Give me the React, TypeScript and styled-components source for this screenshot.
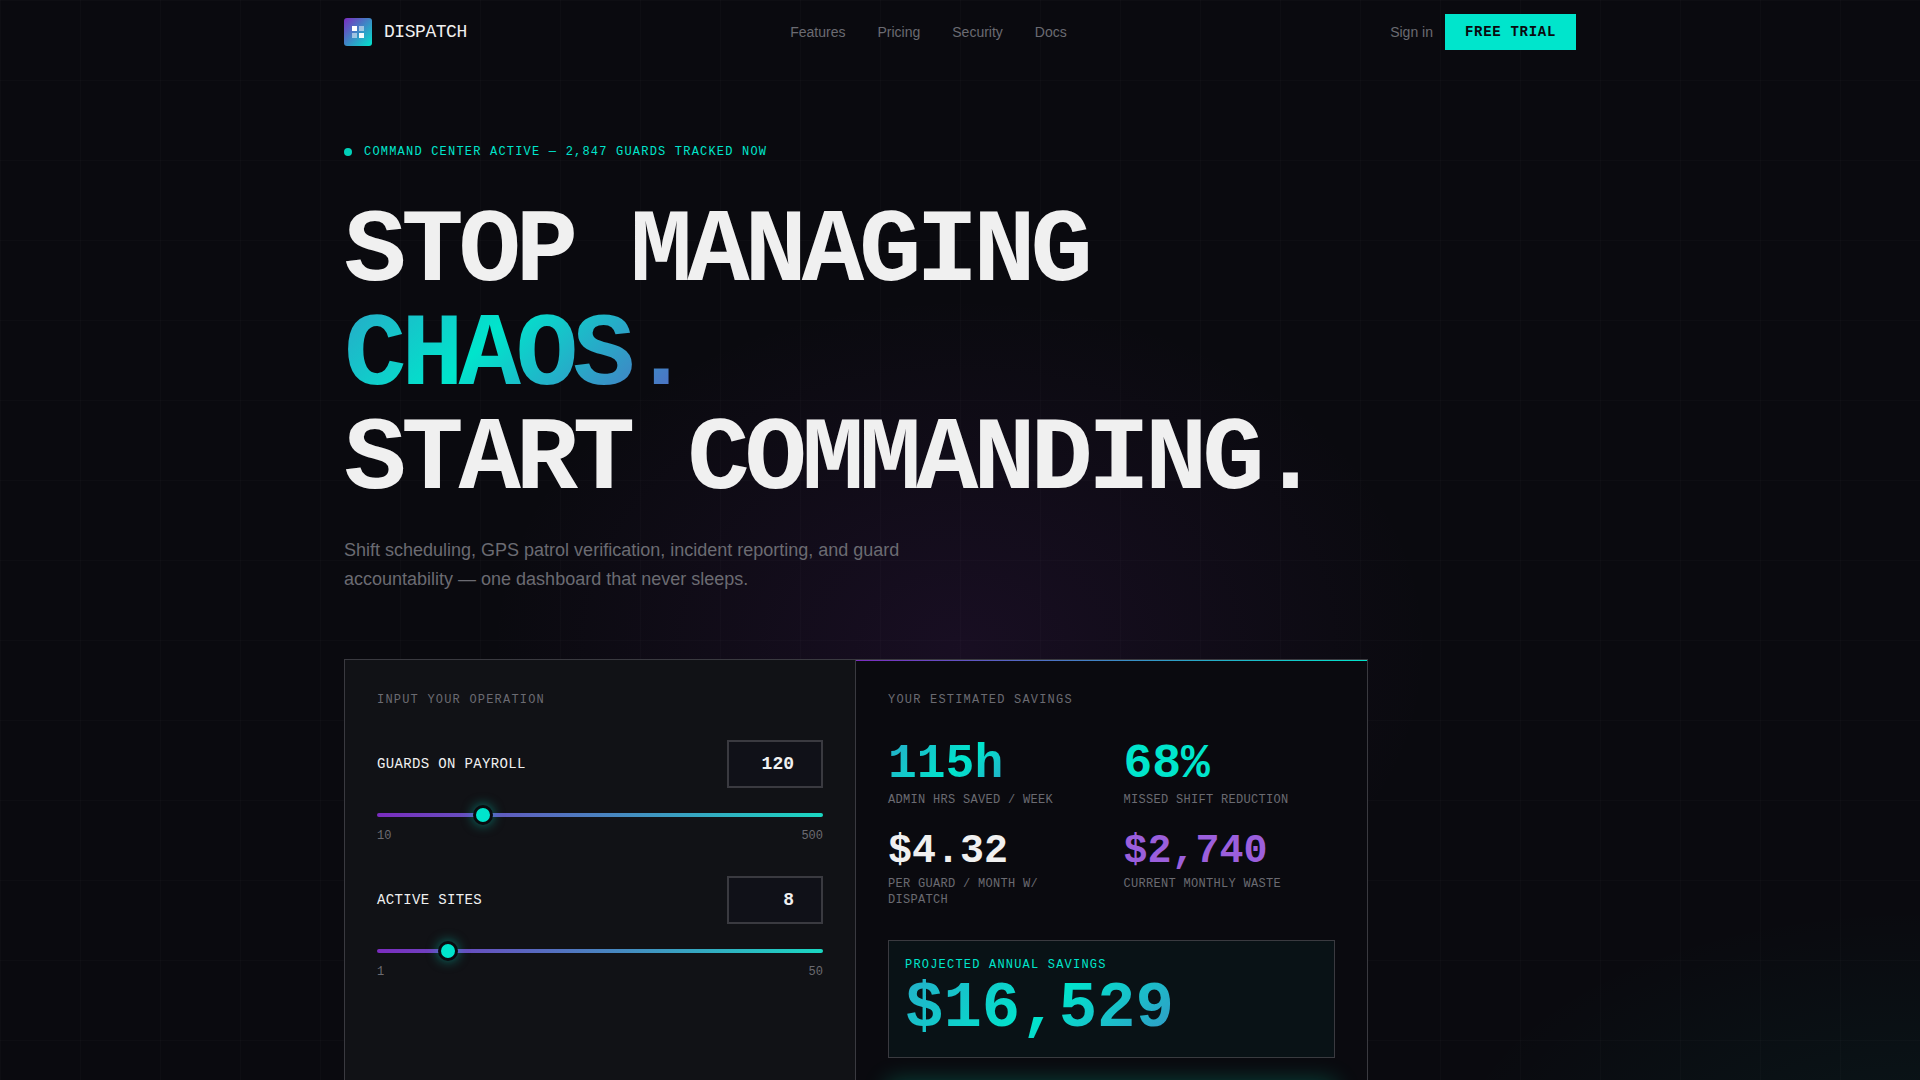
import React, { useState } from "react";
import styled, { createGlobalStyle, css } from "styled-components";
import { ArrowRight } from "lucide-react";

const mono = '"Liberation Mono", "Courier New", monospace';
const sans = '"Liberation Sans", Arial, sans-serif';
const teal = "#00e5cc";
const violet = "#7b2cbf";
const ink = "#0a0a0f";
const line = "#3a3a40";
const muted = "#6b6b72";
const paper = "#f0f0f0";

const chroma = css`
  background: linear-gradient(135deg, ${violet} 0%, ${teal} 60%, ${violet} 100%);
  background-size: 200% 200%;
  background-position: 90% 50%;
  background-clip: text;
  -webkit-background-clip: text;
  color: transparent;
`;

const GlobalStyle = createGlobalStyle`
  *, *::before, *::after { box-sizing: border-box; }
  body { margin: 0; background: ${ink}; color: ${paper}; font-family: ${sans}; }
  h1, h2, p, dl, dd { margin: 0; }
  h2 { font-weight: 400; }
  a { color: inherit; text-decoration: none; }
`;

const Page = styled.div`
  height: 100vh;
  overflow: hidden;
  background:
    radial-gradient(ellipse 470px 350px at 50% 60%, rgba(128, 44, 175, 0.12), transparent),
    radial-gradient(ellipse 480px 260px at 100% 108%, rgba(0, 229, 204, 0.06), transparent),
    linear-gradient(rgba(255, 255, 255, 0.016) 1px, transparent 1px) 0 0 / 80px 80px,
    linear-gradient(90deg, rgba(255, 255, 255, 0.016) 1px, transparent 1px) 0 0 / 80px 80px,
    ${ink};
`;

const Container = styled.div`
  max-width: 1280px;
  margin: 0 auto;
  padding: 0 24px;
`;

const NavBar = styled.header`
  display: flex;
  align-items: center;
  justify-content: space-between;
  height: 64px;
`;

const Brand = styled.a`
  display: flex;
  align-items: center;
  gap: 12px;
  font: 500 18px/28px ${mono};
  letter-spacing: -0.025em;
`;

const NavLinks = styled.nav`
  display: flex;
  gap: 32px;
  font-size: 14px;
  line-height: 20px;
  color: ${muted};
`;

const Actions = styled.div`
  display: flex;
  align-items: center;
  gap: 12px;
  font-size: 14px;
  line-height: 20px;
  color: ${muted};
`;

const TrialButton = styled.button`
  border: 0;
  padding: 8px 20px;
  background: ${teal};
  color: ${ink};
  font: 700 14px/20px ${mono};
  letter-spacing: 0.05em;
  cursor: pointer;
`;

const Hero = styled.main`
  padding-top: 80px;
`;

const Status = styled.p`
  display: flex;
  align-items: center;
  gap: 12px;
  margin-bottom: 40px;
  color: ${teal};
  font: 12px/16px ${mono};
  letter-spacing: 0.1em;
`;

const Dot = styled.i`
  width: 8px;
  height: 8px;
  border-radius: 50%;
  background: ${teal};
  opacity: 0.9;
`;

const Headline = styled.h1`
  margin-bottom: 24px;
  font: 700 104px/104px ${mono};
  letter-spacing: -0.05em;
`;

const Chroma = styled.span`
  ${chroma}
`;

const Lead = styled.p`
  max-width: 576px;
  margin-bottom: 65px;
  color: ${muted};
  font-size: 18px;
  line-height: 29px;
`;

const Calculator = styled.section`
  display: grid;
  grid-template-columns: 1fr 1fr;
  max-width: 1024px;
  border: 1px solid ${line};
`;

const Panel = styled.div`
  display: flex;
  flex-direction: column;
  gap: 32px;
  padding: 32px;
`;

const InputPanel = styled(Panel)`
  border-right: 1px solid ${line};
  background: #111216;
`;

const ResultPanel = styled(Panel)`
  position: relative;
  background: ${ink};

  &::before {
    content: "";
    position: absolute;
    top: 0;
    left: 0;
    right: 0;
    height: 1px;
    background: linear-gradient(90deg, ${violet}, ${teal});
  }
`;

const PanelTitle = styled.h2`
  color: ${muted};
  font: 12px/16px ${mono};
  letter-spacing: 0.1em;
`;

const FieldHead = styled.div`
  display: flex;
  align-items: center;
  justify-content: space-between;
  margin-bottom: 16px;
`;

const FieldLabel = styled.label`
  font: 14px/20px ${mono};
  letter-spacing: 0.025em;
`;

const NumberBox = styled.input`
  width: 96px;
  height: 48px;
  padding: 8px 12px;
  border: 2px solid ${line};
  border-radius: 0;
  background: #101118;
  color: ${paper};
  font: 700 18px/28px ${mono};
  text-align: right;
  outline: none;
`;

const Slider = styled.input`
  display: block;
  width: 100%;
  height: 22px;
  margin: 0;
  appearance: none;
  background: transparent;
  cursor: pointer;

  &::-webkit-slider-runnable-track {
    height: 4px;
    border-radius: 2px;
    background: linear-gradient(90deg, ${violet}, #1ad8c2);
  }

  &::-webkit-slider-thumb {
    appearance: none;
    width: 20px;
    height: 20px;
    margin-top: -8px;
    border: 3px solid ${ink};
    border-radius: 50%;
    background: ${teal};
    box-shadow: 0 0 12px rgba(0, 229, 204, 0.5);
  }
`;

const Scale = styled.div`
  display: flex;
  justify-content: space-between;
  padding-top: 2px;
  color: ${muted};
  font: 12px/16px ${mono};
`;

const Stats = styled.dl`
  display: grid;
  grid-template-columns: 1fr 1fr;
  gap: 24px;
`;

const Stat = styled.div`
  display: flex;
  flex-direction: column-reverse;
  justify-content: flex-end;
  align-items: flex-start;
  gap: 4px;
`;

const StatName = styled.dt`
  color: ${muted};
  font: 12px/16px ${mono};
  letter-spacing: 0.025em;
`;

const StatValue = styled.dd<{ $size: number; $color?: string }>`
  align-self: stretch;
  font: 700 ${(p) => p.$size}px / ${(p) => p.$size}px ${mono};
  ${(p) => (p.$color ? `color: ${p.$color};` : chroma)}
`;

const Outcome = styled.div`
  display: flex;
  flex-direction: column;
  gap: 24px;
`;

const Projection = styled.div`
  padding: 16px;
  border: 1px solid ${line};
  background: rgba(0, 229, 204, 0.04);
`;

const ProjectionName = styled.p`
  margin-bottom: 4px;
  color: ${teal};
  font: 12px/16px ${mono};
  letter-spacing: 0.1em;
`;

const ProjectionValue = styled.p`
  font: 700 64px/64px ${mono};
  ${chroma}
`;

const Submit = styled.button`
  display: flex;
  align-items: center;
  justify-content: center;
  height: 56px;
  border: 0;
  background: ${teal};
  color: ${ink};
  box-shadow: 0 0 24px rgba(0, 229, 180, 0.3);
  cursor: pointer;
`;

function Logo() {
  return (
    <svg width="28" height="28" viewBox="0 0 28 28" aria-hidden="true">
      <defs>
        <linearGradient id="mark" x1="0" y1="0" x2="1" y2="1">
          <stop offset="0" stopColor={violet} />
          <stop offset="1" stopColor={teal} />
        </linearGradient>
      </defs>
      <rect width="28" height="28" rx="3" fill="url(#mark)" />
      <g fill="#fff">
        <rect x="8" y="8" width="5" height="5" />
        <rect x="15" y="8" width="5" height="5" opacity="0.5" />
        <rect x="8" y="15" width="5" height="5" opacity="0.5" />
        <rect x="15" y="15" width="5" height="5" opacity="0.95" />
      </g>
    </svg>
  );
}

type FieldProps = { id: string; label: string; min: number; max: number; initial: number };

function Field({ id, label, min, max, initial }: FieldProps) {
  const [value, setValue] = useState(initial);
  const onChange = (e: React.ChangeEvent<HTMLInputElement>) => setValue(Number(e.target.value));
  return (
    <div>
      <FieldHead>
        <FieldLabel htmlFor={id}>{label}</FieldLabel>
        <NumberBox id={id} type="number" min={min} max={max} value={value} onChange={onChange} />
      </FieldHead>
      <Slider type="range" aria-label={label} min={min} max={max} value={value} onChange={onChange} />
      <Scale>
        <span>{min}</span>
        <span>{max}</span>
      </Scale>
    </div>
  );
}

const stats = [
  { name: "ADMIN HRS SAVED / WEEK", value: "115h", size: 48 },
  { name: "MISSED SHIFT REDUCTION", value: "68%", size: 48, color: teal },
  { name: "PER GUARD / MONTH W/ DISPATCH", value: "$4.32", size: 40, color: paper },
  { name: "CURRENT MONTHLY WASTE", value: "$2,740", size: 40, color: "#9b5fdc" },
];

export default function App() {
  return (
    <Page>
      <GlobalStyle />
      <Container>
        <NavBar>
          <Brand href="#">
            <Logo />
            DISPATCH
          </Brand>
          <NavLinks>
            {["Features", "Pricing", "Security", "Docs"].map((item) => (
              <a key={item} href={`#${item.toLowerCase()}`}>
                {item}
              </a>
            ))}
          </NavLinks>
          <Actions>
            <a href="#signin">Sign in</a>
            <TrialButton type="button">FREE TRIAL</TrialButton>
          </Actions>
        </NavBar>
        <Hero>
          <Status>
            <Dot />
            <span>COMMAND CENTER ACTIVE — 2,847 GUARDS TRACKED NOW</span>
          </Status>
          <Headline>
            STOP MANAGING
            <br />
            <Chroma>CHAOS.</Chroma>
            <br />
            START COMMANDING.
          </Headline>
          <Lead>
            Shift scheduling, GPS patrol verification, incident reporting, and guard accountability —
            one dashboard that never sleeps.
          </Lead>
          <Calculator>
            <InputPanel>
              <PanelTitle>INPUT YOUR OPERATION</PanelTitle>
              <Field id="guards" label="GUARDS ON PAYROLL" min={10} max={500} initial={120} />
              <Field id="sites" label="ACTIVE SITES" min={1} max={50} initial={8} />
            </InputPanel>
            <ResultPanel>
              <PanelTitle>YOUR ESTIMATED SAVINGS</PanelTitle>
              <Stats>
                {stats.map((s) => (
                  <Stat key={s.name}>
                    <StatName>{s.name}</StatName>
                    <StatValue $size={s.size} $color={s.color}>
                      {s.value}
                    </StatValue>
                  </Stat>
                ))}
              </Stats>
              <Outcome>
                <Projection>
                  <ProjectionName>PROJECTED ANNUAL SAVINGS</ProjectionName>
                  <ProjectionValue>$16,529</ProjectionValue>
                </Projection>
                <Submit type="button" aria-label="Start free trial">
                  <ArrowRight size={20} />
                </Submit>
              </Outcome>
            </ResultPanel>
          </Calculator>
        </Hero>
      </Container>
    </Page>
  );
}
